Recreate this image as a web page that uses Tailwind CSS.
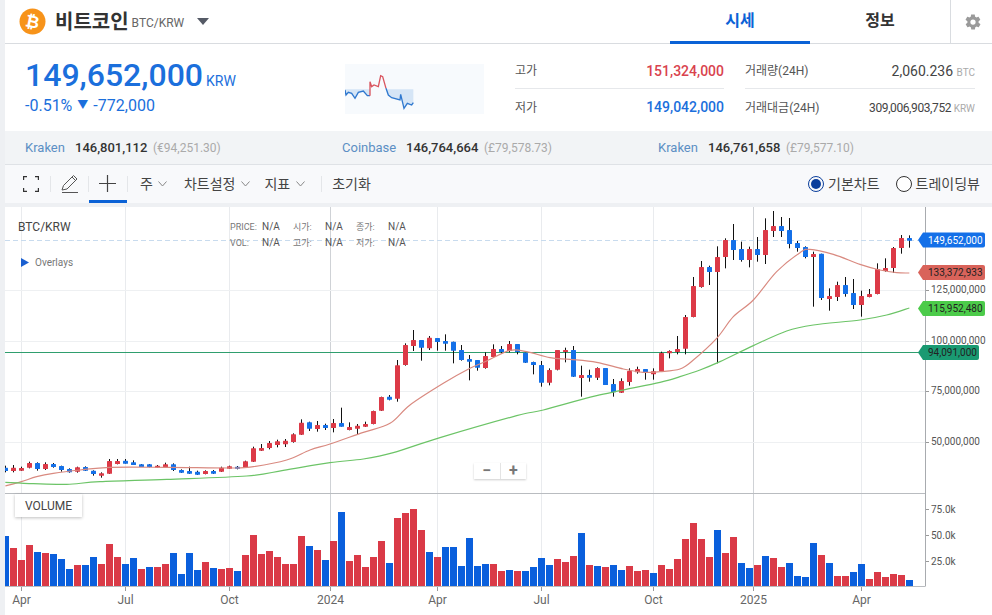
<!DOCTYPE html>
<html lang="ko">
<head>
    <meta charset="UTF-8">
    <title>비트코인 BTC/KRW</title>
    <script src="https://cdn.jsdelivr.net/npm/@tailwindcss/browser@4"></script>
</head>
<body class="bg-[#eef0f3] w-[992px] h-[615px] overflow-hidden font-['Roboto','Noto_Sans_CJK_KR',sans-serif] text-[#333]">
    <div class="ml-[5px] w-[987px] flex flex-col">

        <!-- header -->
        <div class="h-[44px] bg-white border-b border-[#d9dce0] flex">
            <div class="flex items-center pl-[14px] flex-1">
                <svg width="27" height="27" viewBox="0 0 27 27"><circle cx="13.5" cy="13.5" r="13" fill="#f7931a"/><text x="13.5" y="19.5" text-anchor="middle" transform="rotate(12 13.5 13.5)" font-size="17" font-weight="700" fill="#fff">₿</text></svg>
                <span class="ml-[9px] text-[20px] font-bold text-[#333] leading-none">비트코인</span>
                <span class="ml-[3px] text-[12px] text-[#666] mt-[2px]">BTC/KRW</span>
                <span class="ml-[13px] w-0 h-0 border-x-[6.5px] border-x-transparent border-t-[7px] border-t-[#555a66]"></span>
            </div>
            <div class="w-[140px] h-[44px] border-b-[3px] border-[#0b62d6] flex items-center justify-center text-[16px] font-bold text-[#0b62d6] pt-[1px]">시세</div>
            <div class="w-[140px] flex items-center justify-center text-[16px] font-bold text-[#333] pb-[2px]">정보</div>
            <div class="w-[42px] border-l border-[#d9dce0] flex items-center justify-center">
                <svg class="ml-[2px]" width="18" height="18" viewBox="0 0 24 24" fill="#9a9a9a"><path fill-rule="evenodd" d="M19.4 13c.1-.3.1-.7.1-1s0-.7-.1-1l2.1-1.6c.2-.2.2-.4.1-.6l-2-3.5c-.1-.2-.4-.3-.6-.2l-2.5 1c-.5-.4-1.100-.7-1.700-1l-.4-2.700c0-.2-.2-.4-.5-.4h-4c-.2 0-.5.2-.5.400l-.4 2.700c-.6.3-1.200.6-1.700 1l-2.500-1c-.2-.1-.5 0-.6.2l-2 3.500c-.1.2-.1.4.1.6L4.600 11c-.1.300-.1.700-.1 1s0 .7.1 1l-2.100 1.600c-.2.200-.2.400-.1.600l2 3.500c.1.200.4.300.6.200l2.500-1c.5.400 1.100.7 1.700 1l.4 2.700c0 .2.300.4.500.4h4c.3 0 .5-.2.500-.4l.4-2.700c.6-.3 1.200-.6 1.700-1l2.500 1c.2.100.5 0 .6-.2l2-3.500c.1-.2.1-.4-.1-.6L19.400 13zM12 15.500a3.500 3.500 0 1 1 0-7 3.500 3.500 0 0 1 0 7z"/></svg>
            </div>
        </div>

        <!-- price summary -->
        <div class="h-[87px] bg-white flex">
            <div class="w-[340px] pl-[20px] pt-[10px]">
                <div class="flex items-baseline text-[#1b6fdc]">
                    <span class="text-[32px] leading-[42px] font-medium">149,652,000</span>
                    <span class="ml-[3px] text-[14px]">KRW</span>
                </div>
                <div class="text-[16px] leading-[20px] text-[#1b6fdc] flex items-center">-0.51%<span class="mx-[5px] text-[11px]">▼</span>-772,000</div>
            </div>
            <div class="w-[170px] pt-[20px]">
                <svg width="139" height="50" viewBox="45 27 417 150" class="bg-[#f7fafd]">
                    <path d="M45 103H120V122L112 122 100 108 85 112 75 130 65 115 55 112 48 120 45 105Z M168 103H250V143L245 150 232 145 222 160 212 118 210 135 185 128 175 120Z" fill="#d5e5f6"/>
                    <path d="M45 105L48 120 55 112 65 115 75 130 85 112 100 108 112 122 120 122" fill="none" stroke="#2f78cf" stroke-width="4"/>
                    <path d="M120 122L120 80 125 95 132 90 145 95 152 62 158 65 168 100" fill="none" stroke="#d9555f" stroke-width="4"/>
                    <path d="M168 100L175 120 185 128 210 135 212 118 222 160 232 145 245 150 250 143" fill="none" stroke="#2f78cf" stroke-width="4"/>
                </svg>
            </div>
            <div class="w-[209px] text-[12px] flex flex-col">
                <div class="h-[45px] pt-[10px] flex items-center justify-between border-b border-[#e6e8eb]"><span class="text-[#555]">고가</span><span class="text-[14px] font-medium text-[#d9434e]">151,324,000</span></div>
                <div class="h-[37px] flex items-center justify-between"><span class="text-[#555]">저가</span><span class="text-[14px] font-medium text-[#1b6fdc]">149,042,000</span></div>
            </div>
            <div class="ml-[21px] w-[230px] text-[12px] flex flex-col">
                <div class="h-[45px] pt-[10px] flex items-center justify-between border-b border-[#e6e8eb]"><span class="text-[#555]">거래량(24H)</span><span class="text-[14px] text-[#444]">2,060.236 <span class="text-[10px] text-[#aaa]">BTC</span></span></div>
                <div class="h-[37px] flex items-center justify-between"><span class="text-[#555]">거래대금(24H)</span><span class="text-[12px] text-[#444] tracking-[-0.4px]">309,006,903,752 <span class="text-[10px] text-[#aaa] tracking-normal">KRW</span></span></div>
            </div>
        </div>

        <!-- exchange prices -->
        <div class="h-[34px] bg-[#f2f4f6] border-b border-[#dfe2e6] grid grid-cols-[317px_316px_1fr] pl-[20px] text-[13px] items-center">
            <div class="flex items-baseline"><span class="w-[50px] text-[#5c8fc4]">Kraken</span><span class="w-[78px] font-medium text-[#333]">146,801,112</span><span class="text-[12px] text-[#aaa]">(€94,251.30)</span></div>
            <div class="flex items-baseline"><span class="w-[64px] text-[#5c8fc4]">Coinbase</span><span class="w-[78px] font-medium text-[#333]">146,764,664</span><span class="text-[12px] text-[#aaa]">(£79,578.73)</span></div>
            <div class="flex items-baseline"><span class="w-[50px] text-[#5c8fc4]">Kraken</span><span class="w-[78px] font-medium text-[#333]">146,761,658</span><span class="text-[12px] text-[#aaa]">(£79,577.10)</span></div>
        </div>

        <!-- toolbar -->
        <div class="h-[38px] bg-[#f8f9fb] flex items-center text-[14px] text-[#444]">
            <div class="w-[45px] h-full flex items-center justify-center pl-[7px]">
                <svg width="16" height="16" viewBox="0 0 16 16" fill="none" stroke="#333" stroke-width="1.200"><path d="M.6 4V.6H4M12 .6H15.400V4M15.400 12V15.400H12M4 15.400H.6V12"/></svg>
            </div>
            <div class="w-px h-[16px] bg-[#e4e6e9]"></div>
            <div class="w-[37px] h-full flex items-center justify-center">
                <svg width="20" height="20" viewBox="0 0 20 20" fill="none" stroke="#555" stroke-width="1"><path d="M2 16L3.500 11.500 13.500 1.500 17 5 7 15 2 16ZM12 3L15.500 6.500M2 18.500H18"/></svg>
            </div>
            <div class="w-px h-[16px] bg-[#e4e6e9]"></div>
            <div class="w-[38px] h-full flex items-center justify-center border-b-[3px] border-[#0b62d6] pt-[3px] -mt-px pr-[1px]">
                <svg width="17" height="17" viewBox="0 0 17 17" stroke="#444" stroke-width="1.200"><path d="M8.500 0V17M0 8.500H17"/></svg>
            </div>
            <div class="w-px h-[16px] bg-[#e4e6e9]"></div>
            <span class="ml-[12px]">주</span>
            <svg class="ml-[5px]" width="9" height="6" viewBox="0 0 9 6" fill="none" stroke="#888"><path d="M.5 .5L4.500 5 8.500 .5"/></svg>
            <span class="ml-[17px]">차트설정</span>
            <svg class="ml-[6px]" width="9" height="6" viewBox="0 0 9 6" fill="none" stroke="#888"><path d="M.5 .5L4.500 5 8.500 .5"/></svg>
            <span class="ml-[14px]">지표</span>
            <svg class="ml-[6px]" width="9" height="6" viewBox="0 0 9 6" fill="none" stroke="#888"><path d="M.5 .5L4.500 5 8.500 .5"/></svg>
            <div class="ml-[16px] w-px h-[16px] bg-[#e4e6e9]"></div>
            <span class="ml-[10px]">초기화</span>
            <div class="flex-1"></div>
            <span class="w-[16px] h-[16px] rounded-full border-[1.500px] border-[#0b3f9c] flex items-center justify-center"><span class="w-[10px] h-[10px] rounded-full bg-[#0b3f9c]"></span></span>
            <span class="ml-[4px]">기본차트</span>
            <span class="ml-[16px] w-[16px] h-[16px] rounded-full border-[1.500px] border-[#333] bg-white"></span>
            <span class="ml-[4px] mr-[12px]">트레이딩뷰</span>
        </div>

        <!-- chart -->
        <div class="mt-[4px] h-[408px] bg-white relative">
            <svg id="chart" width="987" height="408" viewBox="5 207 987 408" class="block"></svg>
            <div class="absolute left-[10px] top-[287px] w-[67px] h-[23px] bg-white shadow-[0_1px_3px_rgba(0,0,0,0.25)] flex items-center pl-[10px] text-[12px] text-[#444]">VOLUME</div>
            <div class="absolute left-[469px] top-[256px] w-[52px] h-[16px] bg-white shadow-[0_1px_2px_rgba(0,0,0,0.2)] flex items-center text-[16px] font-bold text-[#777] leading-none">
                <span class="flex-1 text-center border-r border-[#e4e4e4]">−</span><span class="flex-1 text-center">+</span>
            </div>
        </div>
    </div>

    <script>
        // [color, high, top, bottom, low]; y values read at 3x, page y = 205 + v / 3
        const candles = [
            'b782,788,798,802','r780,788,798,802','r785,789,797,798','r770,774,788,790','b772,774,792,797','r772,777,792,795','b774,777,786,788','b782,783,795,800','b790,792,802,803','r785,787,800,803',
            'b784,786,797,798','b796,797,807,812','r802,805,812,818','r762,768,806,807','r762,768,777,778','b762,767,776,776','b766,772,780,780','b777,778,786,786','b777,778,786,787','r780,782,788,789',
            'r773,778,786,788','b775,778,795,798','b793,795,803,804','b785,798,806,807','b797,800,809,810','r796,798,807,808','b795,798,806,807','r785,788,800,801','r782,784,791,792','b783,785,791,793',
            'r767,769,788,789','r725,730,770,771','r717,729,737,738','r708,714,729,733','r704,709,720,727','r702,707,718,726','r685,688,711,713','r643,653,689,690','b650,652,671,678','r648,660,672,680',
            'b656,660,669,675','r642,654,669,682','b608,654,665,665','r652,666,675,676','r657,662,671,690','r650,657,665,666','r617,618,657,658','r575,576,617,618','b570,575,584,586','r465,481,581,590',
            'r415,420,480,482','r375,405,423,438','b405,405,428,467','r393,398,430,435','b399,399,411,437','b388,408,416,437','b410,410,437,475','b420,435,465,467','b450,462,470,526','b465,465,488,497',
            'r442,453,489,491','r418,432,456,458','b423,432,441,446','r408,417,438,442','b417,417,441,448','b443,443,473,474','b470,471,480,508','b468,480,533,545','r490,495,533,541','r435,435,494,496',
            'r428,435,441,472','b423,435,515,516','r482,510,519,575','b494,510,518,530','r487,489,518,525','b489,489,540,540','b522,537,562,575','r520,528,563,564','r490,498,531,542','r485,492,502,506',
            'b492,492,501,524','r490,499,508,524','r440,444,499,501','r436,438,445,460','r393,432,441,448','r330,336,431,448','r216,243,336,337','r168,186,246,248','b182,186,201,240','r124,156,201,475',
            'r100,105,156,190','b57,105,135,165','b110,132,165,170','r125,132,165,187','b96,132,150,170','r40,75,150,177','r18,63,78,96','b36,63,78,96','b39,75,117,130','b108,114,129,140',
            'b124,126,156,160','r140,147,156,305','b146,146,279,285','r250,273,282,317','r230,240,276,288','b216,240,267,275','b222,264,300,312','r257,273,300,335','r252,267,276,277','r175,192,267,268',
            'r160,189,198,200','r126,129,189,204','r90,99,129,146','b91,99,107,128'
        ];
        const volumes = [50,38,26,41,34,33,32,27,17,21,21,29,22,42,29,22,28,17,19,19,22,33,12,33,16,24,18,17,18,15,31,51,32,35,29,22,22,50,40,36,26,45,74,25,31,19,29,45,23,68,73,77,56,34,29,39,39,20,48,20,22,22,15,16,15,15,19,28,21,27,24,30,53,21,20,19,21,16,20,15,16,13,21,17,27,47,63,47,29,56,33,49,23,18,21,30,28,19,23,10,9,43,31,23,10,10,14,22,7,14,9,12,11,6];
        const volColor = 'brrrbrbbbrbbrrrbbrbrrbbbbrbrrbrrrrrrrrbrbrbrrrrrbrrrrbrbbbbbbrrbrbbbbrrrbrbrbbrrrbrrrrrrrbrrbbrbrrbbbbrbrrbbrrrrrb';

        const y = v => 205 + v / 3;
        const pts = (list, ox) => list.map(p => [ox + p[0] / 3, y(p[1])]);

        // catmull-rom through the points so the averages don't look polygonal
        function smooth(p) {
            let d = `M${p[0][0]} ${p[0][1]}`;
            for (let i = 0; i < p.length - 1; i++) {
                const a = p[i - 1] || p[i], b = p[i], c = p[i + 1], e = p[i + 2] || c;
                d += `C${b[0] + (c[0] - a[0]) / 6} ${b[1] + (c[1] - a[1]) / 6} ${c[0] - (e[0] - b[0]) / 6} ${c[1] - (e[1] - b[1]) / 6} ${c[0]} ${c[1]}`;
            }
            return d;
        }

        const redMa = smooth([
            ...pts([[16,843],[64,830],[110,815],[160,805],[240,795],[330,787],[500,787],[700,789],[760,785],[860,765],[930,735],[990,717]], 0),
            ...pts([[100,682],[180,655],[240,600],[340,535],[420,490],[470,468],[540,436],[590,440],[660,458],[720,463],[800,472],[880,492],[940,502],[990,500]], 330),
            ...pts([[60,492],[100,465],[170,400],[220,335],[280,285],[350,200],[420,143],[450,133],[520,148],[600,178],[660,195],[710,203],[748,204]], 660)
        ]);
        const greenMa = smooth([
            ...pts([[16,832],[100,836],[200,838],[300,830],[500,823],[740,813],[850,796],[990,773]], 0),
            ...pts([[100,762],[190,743],[330,698],[560,632],[640,615],[800,572],[990,532]], 330),
            ...pts([[60,515],[120,495],[180,470],[280,422],[380,378],[460,360],[600,345],[680,330],[748,309]], 660)
        ]);

        const label = (x, yy, s, size, fill, extra) => `<text x="${x}" y="${yy}" font-size="${size}" fill="${fill}" ${extra || ''}>${s}</text>`;
        const tag = (yy, right, fill, s, color) => `<path d="M918 ${yy}L923 ${yy - 7.500}H${right - 2}Q${right} ${yy - 7.500} ${right} ${yy - 5.500}V${yy + 5.500}Q${right} ${yy + 7.500} ${right - 2} ${yy + 7.500}H923Z" fill="${fill}"/>` + label(928, yy + 3.500, s, 10, color);

        let out = '';
        // grid
        [[21.5,0],[125.5,0],[229.5,0],[330.5,1],[437.5,0],[541.5,0],[653.5,0],[753.5,1],[861.5,0]].forEach(g => {
            const c = g[1] ? '#cfd2d6' : '#e9ebee';
            out += `<path d="M${g[0]} 207V493M${g[0]} 494V586" stroke="${c}"/>`;
            out += `<path d="M${g[0]} 586V591" stroke="#999"/>`;
        });
        [290.5,341.5,391.5,442.5].forEach(g => { out += `<path d="M5 ${g}H925" stroke="#eef0f2"/><path d="M925 ${g}H929" stroke="#999"/>`; });
        [509.5,535.5,561.5].forEach(g => { out += `<path d="M925 ${g}H929" stroke="#999"/>`; });
        out += '<path d="M5 240.500H925" stroke="#c8dbee" stroke-dasharray="5 3"/>';
        out += '<path d="M5 352.500H925" stroke="#2f9e6e"/>';
        out += '<path d="M5 493.500H925M5 586.500H925" stroke="#b9bcc0"/><path d="M925.500 207V586.500" stroke="#a8abaf"/>';

        // volume
        volumes.forEach((h, k) => {
            const c = volColor[k] === 'b' ? '#0a5fdc' : '#da3a47';
            out += `<rect x="${2 + 8 * k}" y="${586 - h}" width="7" height="${h}" fill="${c}"/>`;
        });

        // candles
        candles.forEach((s, k) => {
            const v = s.slice(1).split(',').map(Number);
            const c = s[0] === 'b' ? '#1470e8' : '#dc3a47';
            const x = 3 + 8 * k;
            out += `<rect x="${x + 2}" y="${y(v[0])}" width="1" height="${(v[3] - v[0]) / 3}" fill="#111"/>`;
            out += `<rect x="${x}" y="${y(v[1])}" width="5" height="${Math.max((v[2] - v[1]) / 3, 2)}" rx="0.500" fill="${c}"/>`;
        });

        // moving averages
        out += `<path d="${redMa}" fill="none" stroke="#d98a80" stroke-width="1.200"/>`;
        out += `<path d="${greenMa}" fill="none" stroke="#6cc467" stroke-width="1.200"/>`;

        // legend
        out += label(18, 231, 'BTC/KRW', 12, '#444');
        [[226,'PRICE:','시가:','종가:'],[242,'VOL:','고가:','저가:']].forEach(r => {
            const t = r[0] + 4;
            out += label(230, t, r[1], 9, '#777') + label(262, t, 'N/A', 10, '#555');
            out += label(293, t, r[2], 9, '#777') + label(325, t, 'N/A', 10, '#555');
            out += label(356, t, r[3], 9, '#777') + label(388, t, 'N/A', 10, '#555');
        });
        out += '<path d="M21 258L29 262.500 21 267Z" fill="#1a5fd0"/>' + label(35, 266, 'Overlays', 10, '#777');

        // price axis
        out += label(931, 293, '125,000,000', 10, '#555');
        out += label(931, 344, '100,000,000', 10, '#555');
        out += label(931, 394, '75,000,000', 10, '#555');
        out += label(931, 445, '50,000,000', 10, '#555');
        out += tag(240, 985, '#1470e8', '149,652,000', '#fff');
        out += tag(272.500, 985, '#d9635a', '133,372,933', '#222');
        out += tag(308.500, 985, '#4ccb4a', '115,952,480', '#222');
        out += tag(352.500, 979, '#1a9a72', '94,091,000', '#222');

        // volume axis + time axis
        out += label(931, 513, '75.0k', 10, '#555') + label(931, 539, '50.0k', 10, '#555') + label(931, 565, '25.0k', 10, '#555');
        [[21.5,'Apr'],[125.5,'Jul'],[229.5,'Oct'],[330.5,'2024'],[437.5,'Apr'],[541.5,'Jul'],[653.5,'Oct'],[753.5,'2025'],[861.5,'Apr']].forEach(t => {
            out += label(t[0], 604, t[1], 12, '#666', 'text-anchor="middle"');
        });

        document.getElementById('chart').innerHTML = out;
    </script>
</body>
</html>
